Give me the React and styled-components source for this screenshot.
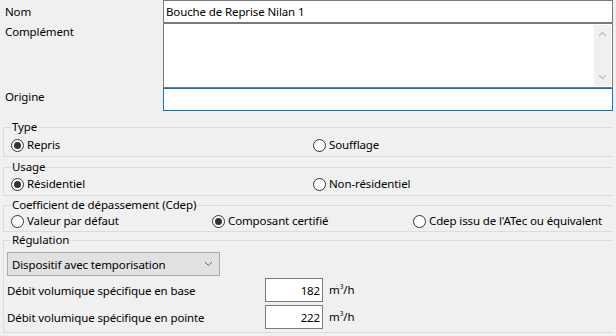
import React from "react";
import styled, { createGlobalStyle } from "styled-components";

const GlobalStyle = createGlobalStyle`
  html, body {
    margin: 0;
    padding: 0;
    background: #f0f0f0;
    overflow: hidden;
  }
  body {
    font-family: "Noto Sans", "Open Sans", sans-serif;
    font-size: 11.5px;
    letter-spacing: -0.12px;
    color: #000;
  }
`;

export default function App() {
  return (
    <>
      <GlobalStyle />
      <Page>
        <TopGrid>
          <FieldLabel>Nom</FieldLabel>
          <TextBox $height={23}>Bouche de Reprise Nilan 1</TextBox>
          <FieldLabel $top>Complément</FieldLabel>
          <TextArea>
            <Scrollbar>
              <ScrollArrow viewBox="0 0 9 6">
                <path d="M1 5 L4.5 1.5 L8 5" />
              </ScrollArrow>
              <ScrollArrow viewBox="0 0 9 6">
                <path d="M1 1 L4.5 4.5 L8 1" />
              </ScrollArrow>
            </Scrollbar>
          </TextArea>
          <FieldLabel $shift={-3}>Origine</FieldLabel>
          <TextBox $height={23} $focused />
        </TopGrid>

        <Group $mt={8} $pb={3}>
          <Legend>Type</Legend>
          <RadioRow $cols="302px 1fr" $pt={2}>
            <Radio checked label="Repris" />
            <Radio label="Soufflage" />
          </RadioRow>
        </Group>

        <Group $mt={2} $pb={3}>
          <Legend>Usage</Legend>
          <RadioRow $cols="302px 1fr" $pt={1}>
            <Radio checked label="Résidentiel" />
            <Radio label="Non-résidentiel" />
          </RadioRow>
        </Group>

        <Group $mt={1} $pb={2}>
          <Legend>Coefficient de dépassement (Cdep)</Legend>
          <RadioRow $cols="201px 201px 1fr" $pt={0}>
            <Radio label="Valeur par défaut" />
            <Radio checked label="Composant certifié" />
            <Radio label="Cdep issu de l'ATec ou équivalent" />
          </RadioRow>
        </Group>

        <Group $mt={0} $pb={3} $pl={3}>
          <Legend $ml={4}>Régulation</Legend>
          <Combo>
            <span>Dispositif avec temporisation</span>
            <ComboChevron viewBox="0 0 9 6">
              <path d="M1 1 L4.5 4.5 L8 1" />
            </ComboChevron>
          </Combo>
          <FlowRow $mt={2}>
            <FlowLabel>Débit volumique spécifique en base</FlowLabel>
            <NumberBox>182</NumberBox>
            <Unit>
              m<sup>3</sup>/h
            </Unit>
          </FlowRow>
          <FlowRow $mt={3}>
            <FlowLabel>Débit volumique spécifique en pointe</FlowLabel>
            <NumberBox>222</NumberBox>
            <Unit>
              m<sup>3</sup>/h
            </Unit>
          </FlowRow>
        </Group>
      </Page>
    </>
  );
}

function Radio({ checked, label }) {
  return (
    <RadioItem>
      <RadioCircle $checked={checked} />
      <span>{label}</span>
    </RadioItem>
  );
}

const Page = styled.div`
  width: 616px;
  height: 336px;
  box-sizing: border-box;
  padding: 0 3px 0 0;
`;

const TopGrid = styled.div`
  display: grid;
  grid-template-columns: 163px 1fr;
  grid-template-rows: 23px 65px 23px;
`;

const FieldLabel = styled.div`
  padding-left: 5px;
  display: flex;
  align-items: ${({ $top }) => ($top ? "flex-start" : "center")};
  padding-top: ${({ $top }) => ($top ? "1px" : "0")};
  position: relative;
  top: ${({ $shift }) => $shift || 0}px;
`;

const TextBox = styled.div`
  box-sizing: border-box;
  height: ${({ $height }) => $height}px;
  background: #fff;
  border: 1px solid ${({ $focused }) => ($focused ? "#0078d7" : "#7a7a7a")};
  padding: 0 2px;
  display: flex;
  align-items: center;
  white-space: nowrap;
`;

const TextArea = styled.div`
  box-sizing: border-box;
  height: 65px;
  background: #fff;
  border: 1px solid #7a7a7a;
  display: flex;
  justify-content: flex-end;
  padding: 1px;
`;

const Scrollbar = styled.div`
  width: 17px;
  background: #f0f0f0;
  display: flex;
  flex-direction: column;
  justify-content: space-between;
  align-items: center;
  padding: 6px 0;
  box-sizing: border-box;
`;

const ScrollArrow = styled.svg`
  width: 9px;
  height: 6px;
  fill: none;
  stroke: #bfbfbf;
  stroke-width: 1.3;
`;

const Group = styled.fieldset`
  margin: ${({ $mt }) => $mt}px 0 0 3px;
  padding: 0 0 ${({ $pb }) => $pb}px ${({ $pl }) => $pl ?? 7}px;
  border: 1px solid #dcdcdc;
  border-right: none;
  min-width: 0;
`;

const Legend = styled.legend`
  padding: 0 1px;
  margin-left: ${({ $ml }) => $ml || 0}px;
  line-height: 16px;
`;

const RadioRow = styled.div`
  display: grid;
  grid-template-columns: ${({ $cols }) => $cols};
  padding-top: ${({ $pt }) => $pt}px;
  height: 16px;
`;

const RadioItem = styled.label`
  display: flex;
  align-items: center;
  gap: 3px;
  white-space: nowrap;
  line-height: 16px;
`;

const RadioCircle = styled.span`
  box-sizing: border-box;
  width: 13px;
  height: 13px;
  border-radius: 50%;
  border: 1px solid #333;
  background: #fff;
  display: flex;
  align-items: center;
  justify-content: center;

  &::after {
    content: "";
    width: 7px;
    height: 7px;
    border-radius: 50%;
    background: #333;
    display: ${({ $checked }) => ($checked ? "block" : "none")};
  }
`;

const Combo = styled.div`
  box-sizing: border-box;
  margin-top: 4px;
  width: 213px;
  height: 24px;
  background: #e1e1e1;
  border: 1px solid #adadad;
  display: flex;
  align-items: center;
  justify-content: space-between;
  padding: 0 6px 0 4px;
`;

const ComboChevron = styled.svg`
  width: 9px;
  height: 6px;
  fill: none;
  stroke: #606060;
  stroke-width: 1;
`;

const FlowRow = styled.div`
  display: flex;
  align-items: center;
  height: 24px;
  margin-top: ${({ $mt }) => $mt}px;
`;

const FlowLabel = styled.span`
  width: 258px;
  white-space: nowrap;
`;

const NumberBox = styled.div`
  box-sizing: border-box;
  width: 58px;
  height: 24px;
  background: #fff;
  border: 1px solid #7a7a7a;
  display: flex;
  align-items: center;
  justify-content: flex-end;
  padding-right: 2px;
`;

const Unit = styled.span`
  margin-left: 6px;
  line-height: 16px;

  sup {
    font-size: 6.5px;
    vertical-align: 5px;
    line-height: 0;
  }
`;
